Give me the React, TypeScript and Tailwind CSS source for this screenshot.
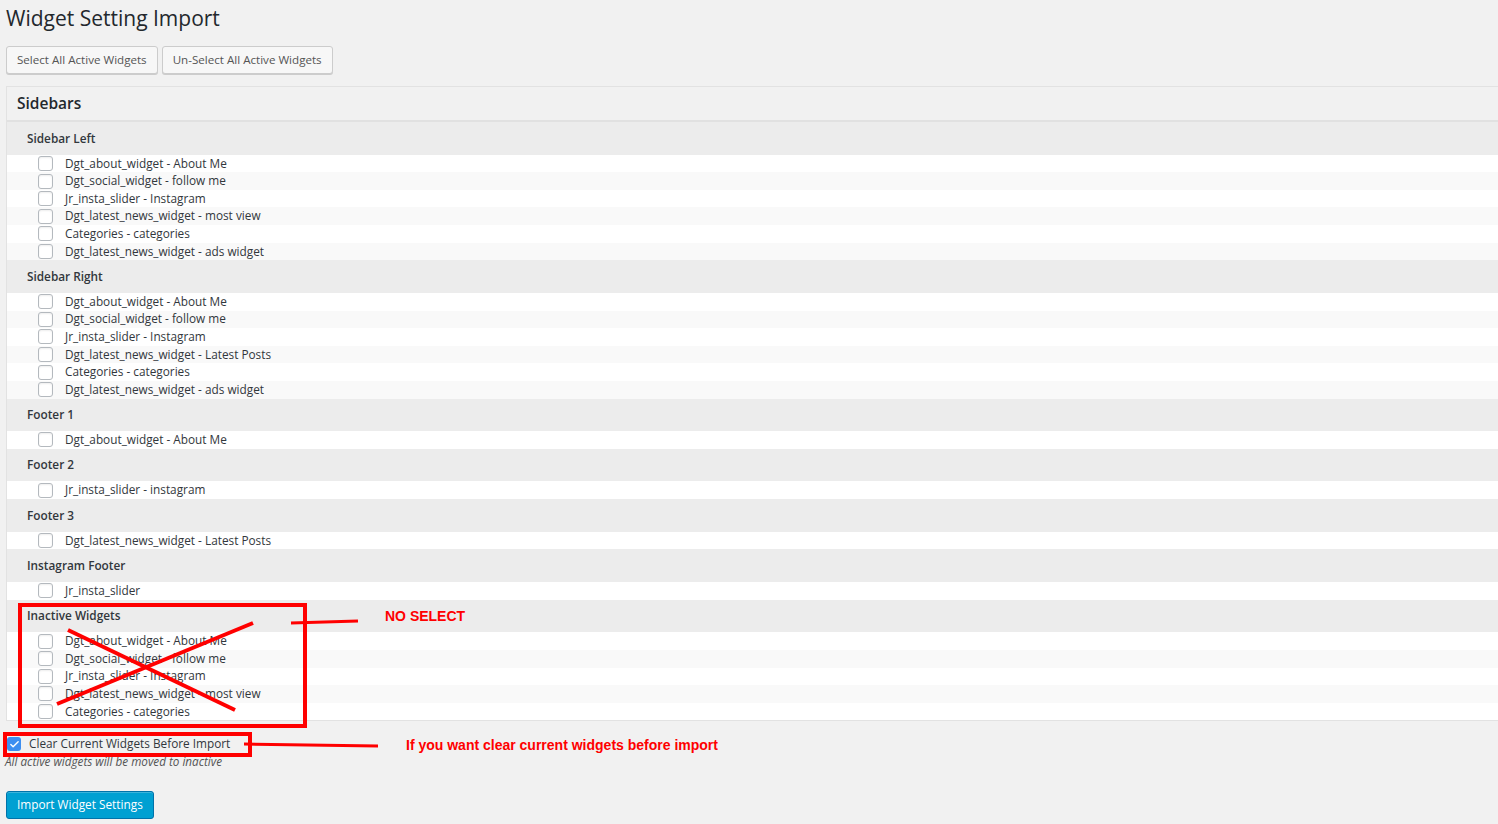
import { Check } from "lucide-react";

type Group = {
  title: string,
  items: string[],
}

const groups: Group[] = [
  {
    title: "Sidebar Left",
    items: [
      "Dgt_about_widget - About Me",
      "Dgt_social_widget - follow me",
      "Jr_insta_slider - Instagram",
      "Dgt_latest_news_widget - most view",
      "Categories - categories",
      "Dgt_latest_news_widget - ads widget",
    ],
  },
  {
    title: "Sidebar Right",
    items: [
      "Dgt_about_widget - About Me",
      "Dgt_social_widget - follow me",
      "Jr_insta_slider - Instagram",
      "Dgt_latest_news_widget - Latest Posts",
      "Categories - categories",
      "Dgt_latest_news_widget - ads widget",
    ],
  },
  { title: "Footer 1", items: ["Dgt_about_widget - About Me"] },
  { title: "Footer 2", items: ["Jr_insta_slider - instagram"] },
  { title: "Footer 3", items: ["Dgt_latest_news_widget - Latest Posts"] },
  { title: "Instagram Footer", items: ["Jr_insta_slider"] },
  {
    title: "Inactive Widgets",
    items: [
      "Dgt_about_widget - About Me",
      "Dgt_social_widget - follow me",
      "Jr_insta_slider - Instagram",
      "Dgt_latest_news_widget - most view",
      "Categories - categories",
    ],
  },
];

function WidgetGroup({ title, items } : Group) {
  return (
    <section className="w-full flex flex-col">
      <div className="h-[32.7px] flex items-center pl-[20px] bg-[#ececec]">
        <span className="text-[11.8px] font-semibold text-[#32373c]">{ title }</span>
      </div>
      {items.map((item, i) => (
        <label
          key={i}
          className={`h-[17.6px] flex items-center ${i % 2 === 0 ? "bg-white" : "bg-[#f9f9f9]"}`}
        >
          <span className="ml-[31px] w-[15px] h-[15px] rounded-[3px] border border-[#b4b9be] bg-white shadow-[inset_0_1px_2px_rgba(0,0,0,0.07)]"></span>
          <span className="ml-[12px] text-[11.8px] text-[#32373c]">{ item }</span>
        </label>
      ))}
    </section>
  );
}

export default function App() {
  return (
    <div className="relative min-h-screen w-full bg-[#f1f1f1] font-['Open_Sans',sans-serif] overflow-hidden">
      <div className="pl-[6px] flex flex-col">
        {/* Title */}
        <h1 className="pt-[3px] text-[21px] leading-[30px] text-[#23282d]">Widget Setting Import</h1>

        {/* Buttons */}
        <div className="mt-[13px] flex gap-[4px]">
          <button className="h-[28px] px-[10px] rounded-[3px] border border-[#cccccc] bg-[#f7f7f7] shadow-[0_1px_0_#cccccc] text-[11.6px] text-[#555]">
            Select All Active Widgets
          </button>
          <button className="h-[28px] px-[10px] rounded-[3px] border border-[#cccccc] bg-[#f7f7f7] shadow-[0_1px_0_#cccccc] text-[11.6px] text-[#555]">
            Un-Select All Active Widgets
          </button>
        </div>

        {/* Panel */}
        <section className="mt-[12px] border border-r-0 border-[#e2e2e2] flex flex-col">
          <div className="h-[35px] flex items-center pl-[10px] bg-[#f1f1f1] border-b-2 border-[#e1e1e1]">
            <span className="text-[15.5px] font-semibold text-[#23282d]">Sidebars</span>
          </div>
          {groups.map((g) => (
            <WidgetGroup key={g.title} title={g.title} items={g.items} />
          ))}
        </section>

        {/* Clear option */}
        <label className="mt-[15px] flex items-center h-[16px]">
          <span className="ml-[1px] w-[14px] h-[14px] rounded-[3px] bg-[#3d8ef0] flex items-center justify-center">
            <Check size={11} strokeWidth={3} className="text-white" />
          </span>
          <span className="ml-[8px] text-[11.8px] text-[#32373c]">Clear Current Widgets Before Import</span>
        </label>
        <p className="mt-[2px] text-[11.7px] italic text-[#555] leading-[15px] -ml-[1px]">All active widgets will be moved to inactive</p>

        <div className="mt-[22px]">
          <button className="h-[28px] px-[10px] rounded-[3px] border border-[#0073aa] bg-[#00a0d2] shadow-[inset_0_1px_0_rgba(120,200,230,0.5)] text-[11.8px] text-white">
            Import Widget Settings
          </button>
        </div>
      </div>

      {/* Annotations drawn over the page */}
      <svg className="absolute inset-0 pointer-events-none" width="1498" height="824">
        <g stroke="#ff0000" strokeWidth="4" fill="none">
          <rect x="20" y="605" width="285" height="121" />
          <line x1="68" y1="630" x2="235" y2="710" />
          <line x1="57" y1="704" x2="253" y2="623" />
          <line x1="291" y1="623" x2="358" y2="621" strokeWidth="3" />
          <rect x="5" y="734" width="245" height="21" />
          <line x1="244" y1="744" x2="378" y2="746" strokeWidth="3" />
        </g>
      </svg>
      <span className="absolute left-[385px] top-[606px] text-[14px] font-bold text-[#ff0000] font-['Liberation_Sans',Arial,sans-serif]">NO SELECT</span>
      <span className="absolute left-[406px] top-[735px] text-[14px] font-bold text-[#ff0000] font-['Liberation_Sans',Arial,sans-serif]">If you want clear current widgets before import</span>
    </div>
  );
}
